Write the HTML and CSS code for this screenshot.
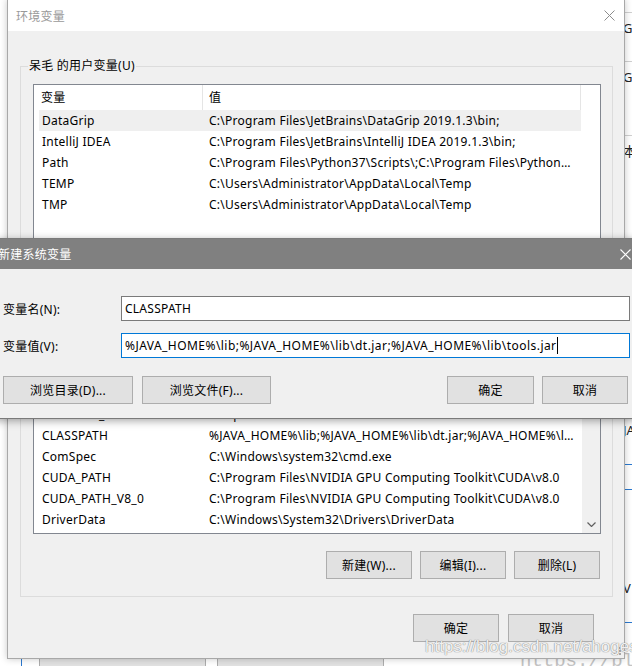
FILE: index.html
```html
<!DOCTYPE html>
<html>
<head>
    <meta charset="utf-8">
    <title>环境变量</title>
    <link rel="stylesheet" href="styles.css">
</head>
<body>
<div class="desktop">
    <!-- system properties window behind, only its edges peek out -->
    <div class="behind-right">
        <div class="strip-line first"></div>
        <div class="strip-text">G(</div>
        <div class="strip-line"></div>
        <div class="strip-text">G(</div>
        <div class="strip-line wide"></div>
        <div class="strip-text">本</div>
        <div class="strip-text java">JA</div>
        <div class="strip-line blue"></div>
        <div class="strip-line blue"></div>
        <div class="strip-text vee">V</div>
        <div class="strip-line blue"></div>
    </div>
    <div class="behind-bottom">
        <span class="old-btn"></span>
        <span class="old-btn"></span>
    </div>
    <div class="behind-url">https://blog</div>

    <div class="dialog env">
        <div class="titlebar">
            <span class="title">环境变量</span>
            <svg class="close" width="11" height="11" viewBox="0 0 11 11"><path d="M0.5 0.5 L10.5 10.5 M10.5 0.5 L0.5 10.5" stroke="#8c8c8c" stroke-width="1" fill="none"/></svg>
        </div>
        <div class="env-body">
            <fieldset class="group">
                <legend>呆毛 的用户变量(U)</legend>
                <div class="listview user-list">
                    <div class="lv-main">
                        <div class="lv-head">
                            <span class="col-name">变量</span>
                            <span class="col-value">值</span>
                        </div>
                        <div class="lv-row hot"><span class="name">DataGrip</span><span class="value">C:\Program Files\JetBrains\DataGrip 2019.1.3\bin;</span></div>
                        <div class="lv-row"><span class="name">IntelliJ IDEA</span><span class="value">C:\Program Files\JetBrains\IntelliJ IDEA 2019.1.3\bin;</span></div>
                        <div class="lv-row"><span class="name">Path</span><span class="value">C:\Program Files\Python37\Scripts\;C:\Program Files\Python37\;%USERPROFILE%\AppData\Local\Microsoft\WindowsApps;</span></div>
                        <div class="lv-row"><span class="name">TEMP</span><span class="value">C:\Users\Administrator\AppData\Local\Temp</span></div>
                        <div class="lv-row"><span class="name">TMP</span><span class="value">C:\Users\Administrator\AppData\Local\Temp</span></div>
                    </div>
                    <div class="lv-scroll"></div>
                </div>
                <div class="btn-row">
                    <button class="btn">新建(N)...</button>
                    <button class="btn">编辑(E)...</button>
                    <button class="btn">删除(D)</button>
                </div>
            </fieldset>
            <fieldset class="group">
                <legend>系统变量(S)</legend>
                <div class="listview system-list">
                    <div class="lv-main">
                        <div class="lv-head">
                            <span class="col-name">变量</span>
                            <span class="col-value">值</span>
                        </div>
                        <div class="lv-row"><span class="name">ACLOCAL_PATH</span><span class="value">C:\Program Files\Git\mingw64\share\aclocal</span></div>
                        <div class="lv-row"><span class="name">ANDROID_HOME</span><span class="value">D:\Android\sdk</span></div>
                        <div class="lv-row"><span class="name">CATALINA_HOME</span><span class="value">D:\apache-tomcat-8.5.42</span></div>
                        <div class="lv-row"><span class="name">CLASSPATH</span><span class="value">%JAVA_HOME%\lib;%JAVA_HOME%\lib\dt.jar;%JAVA_HOME%\lib\tools.jar</span></div>
                        <div class="lv-row"><span class="name">ComSpec</span><span class="value">C:\Windows\system32\cmd.exe</span></div>
                        <div class="lv-row"><span class="name">CUDA_PATH</span><span class="value">C:\Program Files\NVIDIA GPU Computing Toolkit\CUDA\v8.0</span></div>
                        <div class="lv-row"><span class="name">CUDA_PATH_V8_0</span><span class="value">C:\Program Files\NVIDIA GPU Computing Toolkit\CUDA\v8.0</span></div>
                        <div class="lv-row"><span class="name">DriverData</span><span class="value">C:\Windows\System32\Drivers\DriverData</span></div>
                    </div>
                    <div class="lv-scroll scrollbar">
                        <div class="sb-thumb"></div>
                        <svg class="sb-arrow" width="9" height="5" viewBox="0 0 9 5"><path d="M0.5 0.5 L4.5 4.5 L8.5 0.5" stroke="#606060" stroke-width="1.2" fill="none"/></svg>
                    </div>
                </div>
                <div class="btn-row">
                    <button class="btn">新建(W)...</button>
                    <button class="btn">编辑(I)...</button>
                    <button class="btn">删除(L)</button>
                </div>
            </fieldset>
            <div class="btn-row footer">
                <button class="btn">确定</button>
                <button class="btn">取消</button>
            </div>
        </div>
        <svg class="grip" width="8" height="8" viewBox="0 0 8 8" fill="#a8a8a8">
            <rect x="6" y="0" width="2" height="2"/>
            <rect x="3" y="3" width="2" height="2"/><rect x="6" y="3" width="2" height="2"/>
            <rect x="0" y="6" width="2" height="2"/><rect x="3" y="6" width="2" height="2"/><rect x="6" y="6" width="2" height="2"/>
        </svg>
    </div>

    <div class="dialog newvar">
        <div class="titlebar">
            <span class="title">新建系统变量</span>
            <svg class="close" width="11" height="11" viewBox="0 0 11 11"><path d="M0.5 0.5 L10.5 10.5 M10.5 0.5 L0.5 10.5" stroke="#fff" stroke-width="1.1" fill="none"/></svg>
        </div>
        <div class="newvar-body">
            <div class="field-row">
                <label>变量名(N):</label>
                <div class="textbox">CLASSPATH</div>
            </div>
            <div class="field-row">
                <label>变量值(V):</label>
                <div class="textbox focused">%JAVA_HOME%\lib;%JAVA_HOME%\lib\dt.jar;%JAVA_HOME%\lib\tools.jar<span class="caret"></span></div>
            </div>
            <div class="newvar-buttons">
                <button class="btn browse-dir">浏览目录(D)...</button>
                <button class="btn browse-file">浏览文件(F)...</button>
                <span class="spacer"></span>
                <button class="btn ok">确定</button>
                <button class="btn cancel">取消</button>
            </div>
        </div>
    </div>

    <div class="watermark">https://blog.csdn.net/ahoges</div>
</div>
</body>
</html>
```

FILE: styles.css
```css
* { box-sizing: border-box; }
body { margin: 0; font-family: "Noto Sans", "Noto Sans CJK SC", sans-serif; font-size: 12px; letter-spacing: 0.25px; color: #000; }
.desktop { position: relative; width: 632px; height: 666px; overflow: hidden; background: #fff; }

/* window behind */
.behind-right { position: absolute; left: 612px; top: 0; width: 30px; display: flex; flex-direction: column; color: #1f3f8f; font-size: 13px; letter-spacing: 0; }
.strip-line { height: 1px; background: #d0d0d0; margin-top: 23px; }
.strip-line.first { margin-top: 12px; }
.strip-line.wide { margin-top: 48px; }
.strip-line.blue { background: #2b79d0; margin-top: 24px; }
.strip-text { padding-left: 11px; line-height: 20px; margin-top: 5px; color: #222; }
.strip-text.java { margin-top: 259px; }
.strip-text.vee { margin-top: 88px; }
.behind-bottom { position: absolute; left: 21px; top: 640px; width: 620px; height: 40px; border-left: 1px solid #2b79d0; display: flex; gap: 11px; padding: 0 0 0 17px; }
.old-btn { width: 167px; height: 28px; border: 1px solid #adadad; background: #e1e1e1; }
.behind-url { position: absolute; left: 520px; top: 650px; font-family: "Liberation Mono", monospace; font-size: 19px; letter-spacing: 0; color: #c4c4c4; }

/* dialogs */
.dialog { position: absolute; display: flex; flex-direction: column; background: #f0f0f0; }
.titlebar { display: flex; align-items: center; justify-content: space-between; flex-shrink: 0; }
.close { display: block; }

.env { left: 7px; top: -1px; width: 618px; height: 660px; border: 1px solid #a8a8a8; box-shadow: 0 0 7px rgba(0, 0, 0, 0.22); }
.env .titlebar { height: 31px; background: #fff; padding: 0 9px 0 8px; }
.env .title { color: #999; }
.env-body { flex: 1; padding: 0 11px 0 12px; display: flex; flex-direction: column; }

.group { margin: 27px 0 0; padding: 10px 11px 17px 12px; border: 1px solid #dcdcdc; min-width: 0; }
.group + .group { margin-top: 3px; }
.group legend { padding: 0 1px; margin-left: -5px; line-height: 16px; }

.listview { display: flex; border: 1px solid #828790; background: #fff; overflow: hidden; }
.user-list { height: 160px; }
.system-list { height: 198px; }
.lv-main { width: 548px; flex-shrink: 0; }
.lv-scroll { flex: 1; }
.lv-head { display: flex; height: 25px; line-height: 25px; }
.lv-head span { border-right: 1px solid #e5e5e5; }
.col-name { width: 169px; padding-left: 7px; }
.col-value { width: 378px; padding-left: 6px; }
.lv-row { display: flex; height: 21px; line-height: 21px; margin: 0 1px 0 5px; white-space: nowrap; }
.lv-row.hot { background: #efefef; }
.lv-row .name { width: 164px; padding-left: 3px; flex-shrink: 0; }
.lv-row .value { flex: 1; min-width: 0; padding: 0 7px 0 6px; overflow: hidden; text-overflow: ellipsis; }

.scrollbar { background: #f0f0f0; display: flex; flex-direction: column; align-items: center; justify-content: space-between; padding: 34px 0 6px; }
.sb-thumb { width: 8px; height: 40px; background: #c2c2c2; }
.sb-arrow { display: block; }

.btn { height: 28px; border: 1px solid #adadad; background: #e1e1e1; font: inherit; letter-spacing: inherit; color: #000; padding: 0; }
.btn-row { display: flex; justify-content: flex-end; gap: 8px; margin: 17px 1px 0 0; }
.btn-row .btn { width: 86px; }
.btn-row.footer { gap: 9px; margin-right: 19px; }

.grip { position: absolute; right: 3px; bottom: 3px; }

/* new system variable dialog */
.newvar { left: -8px; top: 238px; width: 660px; height: 181px; border: 1px solid #7a7a7a; box-shadow: 0 2px 8px rgba(0, 0, 0, 0.35); }
.newvar .titlebar { height: 30px; background: #808080; color: #fff; padding: 0 20px 0 5px; }
.newvar-body { flex: 1; padding: 27px 21px 14px 10px; }
.field-row { display: flex; align-items: center; height: 25px; }
.field-row + .field-row { margin-top: 12px; }
.field-row label { width: 118px; flex-shrink: 0; }
.textbox { flex: 1; height: 25px; line-height: 23px; border: 1px solid #7a7a7a; background: #fff; padding: 0 3px; white-space: nowrap; overflow: hidden; }
.textbox.focused { border-color: #0078d7; letter-spacing: 0.45px; }
.caret { display: inline-block; width: 1px; height: 17px; background: #000; vertical-align: -4px; }
.newvar-buttons { display: flex; margin: 18px 2px 0 0; }
.browse-dir { width: 130px; }
.browse-file { width: 129px; margin-left: 9px; }
.spacer { flex: 1; }
.newvar-buttons .ok { width: 87px; }
.newvar-buttons .cancel { width: 86px; margin-left: 8px; }

.watermark { position: absolute; left: 425px; top: 637px; font-family: "Liberation Sans", sans-serif; font-size: 17px; letter-spacing: 0; color: rgba(255, 255, 255, 0.9); text-shadow: 0 0 1px #8a8a8a, 0 0 1px #8a8a8a; }
```
